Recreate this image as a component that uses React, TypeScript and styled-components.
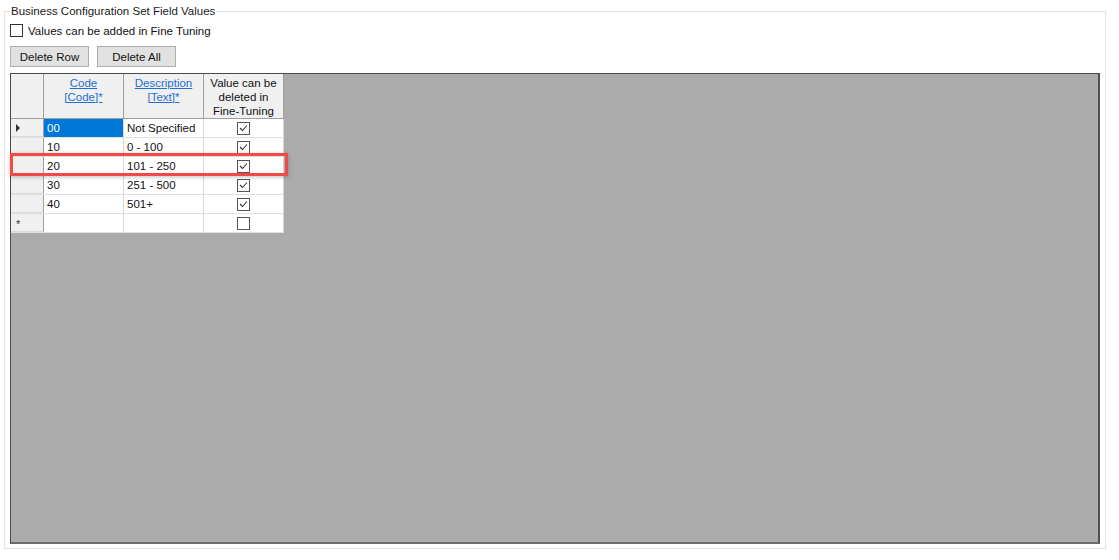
import React from "react";
import styled, { createGlobalStyle } from "styled-components";

const GlobalStyle = createGlobalStyle`
  body {
    margin: 0;
    background: #ffffff;
    font-family: "Liberation Sans", Arial, sans-serif;
    font-size: 12px;
    color: #000;
  }
`;

interface Row {
  code: string;
  text: string;
  checked: boolean;
  selected?: boolean;
  current?: boolean;
  isNew?: boolean;
}

const rows: Row[] = [
  { code: "00", text: "Not Specified", checked: true, selected: true, current: true },
  { code: "10", text: "0 - 100", checked: true },
  { code: "20", text: "101 - 250", checked: true },
  { code: "30", text: "251 - 500", checked: true },
  { code: "40", text: "501+", checked: true },
  { code: "", text: "", checked: false, isNew: true },
];

const CheckMark = () => (
  <svg width="9" height="8" viewBox="0 0 9 8">
    <path d="M1 4 L3.5 6.5 L8 1.5" fill="none" stroke="#333" strokeWidth="1.1" />
  </svg>
);

const App = () => {
  return (
    <>
      <GlobalStyle />
      <Page>
        <Fieldset>
          <Legend>Business Configuration Set Field Values</Legend>
          <OptionRow>
            <Box />
            <span>Values can be added in Fine Tuning</span>
          </OptionRow>
          <Toolbar>
            <Button $width={79}>Delete Row</Button>
            <Button $width={79}>Delete All</Button>
          </Toolbar>
          <GridArea>
            <Table>
              <HeaderRow>
                <RowHead $header />
                <HeadCell>
                  <HeadLink>Code</HeadLink>
                  <HeadLink>[Code]*</HeadLink>
                </HeadCell>
                <HeadCell>
                  <HeadLink>Description</HeadLink>
                  <HeadLink>[Text]*</HeadLink>
                </HeadCell>
                <HeadCell>
                  <span>Value can be</span>
                  <span>deleted in</span>
                  <span>Fine-Tuning</span>
                </HeadCell>
              </HeaderRow>
              {rows.map((r, i) => (
                <DataRow key={i}>
                  <RowHead>
                    {r.current && <Arrow />}
                    {r.isNew && <Star>*</Star>}
                  </RowHead>
                  <Cell $selected={r.selected}>{r.code}</Cell>
                  <Cell>{r.text}</Cell>
                  <CheckCell>
                    <GridBox>{r.checked && <CheckMark />}</GridBox>
                  </CheckCell>
                </DataRow>
              ))}
            </Table>
            <Highlight />
          </GridArea>
        </Fieldset>
      </Page>
    </>
  );
};

export default App;

const Page = styled.div`
  width: 1119px;
  height: 560px;
  padding: 5px 0 0 4px;
  box-sizing: border-box;
`;

const Fieldset = styled.fieldset`
  position: relative;
  margin: 0;
  width: 1102px;
  height: 544px;
  box-sizing: border-box;
  border: 1px solid #e3e3e3;
  padding: 0 5px 4px 5px;
  display: flex;
  flex-direction: column;
`;

const Legend = styled.legend`
  padding: 0 1px;
  margin-left: 0;
  font-size: 11.5px;
  line-height: 12px;
  color: #1a1a1a;
`;

const OptionRow = styled.label`
  display: flex;
  align-items: center;
  gap: 5px;
  height: 15px;
  margin-top: 6px;
  font-size: 11.5px;
  color: #111;
`;

const Box = styled.span`
  width: 11px;
  height: 11px;
  border: 1px solid #333;
  background: #fff;
`;

const Toolbar = styled.div`
  display: flex;
  gap: 8px;
  margin-top: 8px;
`;

const Button = styled.button<{ $width: number }>`
  width: ${(p) => p.$width}px;
  height: 21px;
  padding: 0;
  border: 1px solid #adadad;
  background: #e1e1e1;
  font-family: "Liberation Sans", Arial, sans-serif;
  font-size: 11.5px;
  color: #111;
`;

const GridArea = styled.div`
  position: relative;
  margin-top: 6px;
  flex: 1;
  background: #ababab;
  border-top: 1px solid #4a4a4a;
  border-left: 1px solid #4a4a4a;
  border-right: 2px solid #505050;
  border-bottom: 2px solid #6d6d6d;
`;

const Table = styled.div`
  display: flex;
  flex-direction: column;
  width: fit-content;
  background: #fff;
`;

const HeaderRow = styled.div`
  display: grid;
  grid-template-columns: 33px 80px 80px 80px;
  height: 44px;
  background: #f0f0f0;
  border-bottom: 1px solid #a0a0a0;
`;

const DataRow = styled.div`
  display: grid;
  grid-template-columns: 33px 80px 80px 80px;
  height: 19px;
  border-bottom: 1px solid #e0e0e0;
  box-sizing: border-box;
`;

const RowHead = styled.div<{ $header?: boolean }>`
  background: #f0f0f0;
  border-right: 1px solid #a0a0a0;
  border-bottom: ${(p) => (p.$header ? "none" : "1px solid #dadada")};
  display: flex;
  align-items: center;
  padding-left: 5px;
  position: relative;
`;

const HeadCell = styled.div`
  border-right: 1px solid #a0a0a0;
  display: flex;
  flex-direction: column;
  align-items: center;
  padding-top: 2px;
  font-size: 11.5px;
  line-height: 14px;
  color: #111;
`;

const HeadLink = styled.span`
  color: #1f6fd0;
  text-decoration: underline;
`;

const Cell = styled.div<{ $selected?: boolean }>`
  border-right: 1px solid #d6d6d6;
  padding-left: 3px;
  display: flex;
  align-items: center;
  font-size: 11.5px;
  background: ${(p) => (p.$selected ? "#0078d7" : "#fff")};
  color: ${(p) => (p.$selected ? "#fff" : "#111")};
`;

const CheckCell = styled.div`
  border-right: 1px solid #d6d6d6;
  display: flex;
  align-items: center;
  justify-content: center;
`;

const GridBox = styled.span`
  width: 11px;
  height: 11px;
  border: 1px solid #555;
  background: #fff;
  display: flex;
  align-items: center;
  justify-content: center;
`;

const Arrow = styled.span`
  width: 0;
  height: 0;
  border-top: 4px solid transparent;
  border-bottom: 4px solid transparent;
  border-left: 4px solid #333;
`;

const Star = styled.span`
  font-size: 11px;
  line-height: 11px;
  color: #333;
  margin-top: 3px;
`;

const Highlight = styled.div`
  position: absolute;
  left: -1px;
  top: 79px;
  width: 278px;
  height: 23px;
  box-sizing: border-box;
  border: 3px solid #f24848;
  box-shadow: 0 1px 4px rgba(0, 0, 0, 0.25);
  pointer-events: none;
`;
